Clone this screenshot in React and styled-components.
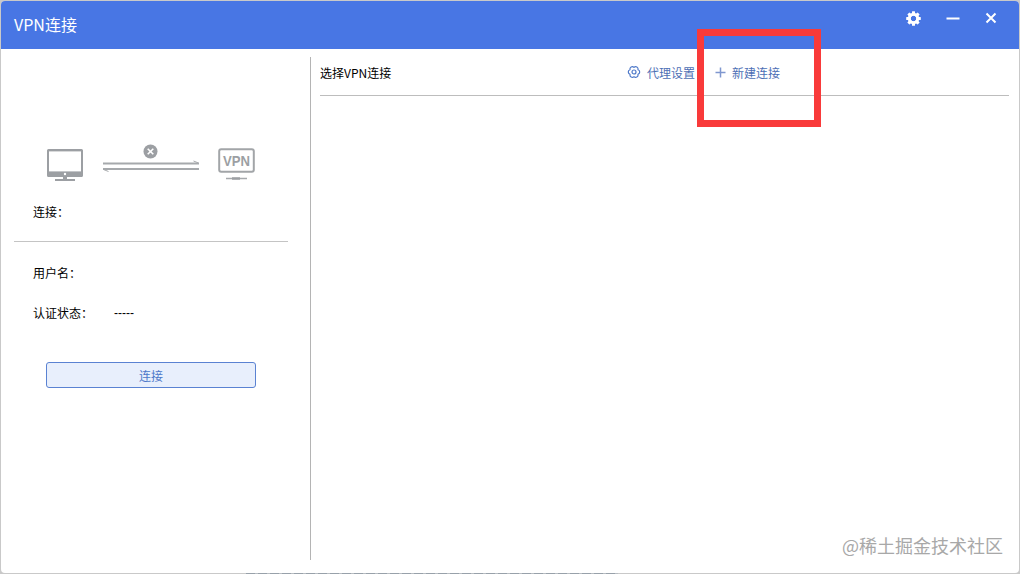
import React from 'react';
import styled, { createGlobalStyle } from 'styled-components';

const GlobalStyle = createGlobalStyle`
  html, body {
    margin: 0;
    padding: 0;
    background: #c9c9c9;
  }
  #root {
    width: 1020px;
    height: 574px;
  }
`;

const FONT = `"Noto Sans CJK SC", "Liberation Sans", sans-serif`;

function DesktopIcon() {
  return (
    <svg width="38" height="33" viewBox="0 0 38 33">
      <path d="M2.5 1h33A1.5 1.5 0 0 1 37 2.5v25a1.5 1.5 0 0 1-1.5 1.5h-33A1.5 1.5 0 0 1 1 27.5v-25A1.5 1.5 0 0 1 2.5 1z" fill="#9c9fa3" />
      <rect x="3" y="3.4" width="32" height="20" fill="#fff" />
      <circle cx="19" cy="26" r="1.2" fill="#fff" />
      <rect x="17" y="29" width="4" height="3" fill="#9c9fa3" />
      <rect x="9" y="31" width="20" height="2" fill="#9c9fa3" />
    </svg>
  );
}

function LinkIcon() {
  return (
    <svg width="98" height="37" viewBox="0 0 98 37">
      <circle cx="48.5" cy="7.5" r="7" fill="#9c9fa3" />
      <path d="M45.7 4.7l5.6 5.6M51.3 4.7l-5.6 5.6" stroke="#fff" strokeWidth="1.6" fill="none" />
      <path d="M1 19.5h96" stroke="#a6a9ac" strokeWidth="2" fill="none" />
      <path d="M91.5 17l5 2" stroke="#a6a9ac" strokeWidth="1" fill="none" />
      <path d="M1 25h96" stroke="#a6a9ac" strokeWidth="2" fill="none" />
      <path d="M1.5 25.5l5 2" stroke="#a6a9ac" strokeWidth="1" fill="none" />
    </svg>
  );
}

function VpnIcon() {
  return (
    <svg width="38" height="33" viewBox="0 0 38 33">
      <rect x="1.2" y="1.2" width="34.6" height="22.6" rx="2" fill="#fff" stroke="#a2a5a8" strokeWidth="2" />
      <text x="5" y="18" textLength="27" lengthAdjust="spacingAndGlyphs" fontFamily='"Liberation Sans", sans-serif' fontWeight="700" fontSize="15" fill="#9c9fa3">VPN</text>
      <path d="M8 30.5h21" stroke="#a6a9ac" strokeWidth="1.4" fill="none" />
      <path d="M14 30.5h8" stroke="#9c9fa3" strokeWidth="2.6" fill="none" />
    </svg>
  );
}

function GearOutline() {
  return (
    <svg width="14" height="14" viewBox="0 0 14 14">
      <path d="M7 2.4A2.4 2.4 0 0 1 11 4.7A2.4 2.4 0 0 1 11 9.3A2.4 2.4 0 0 1 7 11.6A2.4 2.4 0 0 1 3 9.3A2.4 2.4 0 0 1 3 4.7A2.4 2.4 0 0 1 7 2.4z" fill="none" stroke="#4d78c9" strokeWidth="1.2" strokeLinejoin="round" />
      <circle cx="7" cy="7" r="2" fill="none" stroke="#4d78c9" strokeWidth="1.2" />
    </svg>
  );
}

function PlusIcon() {
  return (
    <svg width="11" height="11" viewBox="0 0 11 11">
      <path d="M5.5 0.5v10M0.5 5.5h10" stroke="#7f97cf" strokeWidth="1.5" fill="none" />
    </svg>
  );
}

function SolidGear() {
  return (
    <svg width="15" height="15" viewBox="0 0 15 15">
      <circle cx="7.5" cy="7.5" r="4.2" fill="none" stroke="#fff" strokeWidth="3" />
      {[0, 45, 90, 135].map(a => (
        <rect key={a} x="5.9" y="0.2" width="3.2" height="14.6" rx="0.6" fill="#fff" transform={`rotate(${a} 7.5 7.5)`} mask="url(#gear-hole)" />
      ))}
      <mask id="gear-hole">
        <rect width="15" height="15" fill="#fff" />
        <circle cx="7.5" cy="7.5" r="2.9" fill="#000" />
      </mask>
    </svg>
  );
}

function MinimizeIcon() {
  return (
    <svg width="14" height="14" viewBox="0 0 14 14">
      <path d="M0.5 7.5h13" stroke="#fff" strokeWidth="2" fill="none" />
    </svg>
  );
}

function CloseIcon() {
  return (
    <svg width="12" height="12" viewBox="0 0 12 12">
      <path d="M1.5 1.5l9 9M10.5 1.5l-9 9" stroke="#fff" strokeWidth="2" fill="none" />
    </svg>
  );
}

export default function App() {
  return (
    <>
      <GlobalStyle />
      <Stage>
        <Window>
          <TitleBar>
            <Title>VPN连接</Title>
            <WindowControls>
              <SolidGear />
              <MinimizeIcon />
              <CloseIcon />
            </WindowControls>
          </TitleBar>
          <Body>
            <LeftPanel>
              <Topology>
                <DesktopIcon />
                <LinkIcon />
                <VpnIcon />
              </Topology>
              <StatusLine>连接：</StatusLine>
              <PanelRule />
              <InfoRows>
                <InfoRow>用户名：</InfoRow>
                <InfoRow>
                  <InfoLabel>认证状态：</InfoLabel>
                  <InfoValue>-----</InfoValue>
                </InfoRow>
              </InfoRows>
              <ConnectButton>连接</ConnectButton>
            </LeftPanel>
            <RightPanel>
              <RightHeader>
                <HeaderTitle>选择VPN连接</HeaderTitle>
                <HeaderActions>
                  <ActionLink>
                    <GearOutline />
                    代理设置
                  </ActionLink>
                  <ActionLink>
                    <PlusIcon />
                    新建连接
                  </ActionLink>
                </HeaderActions>
              </RightHeader>
            </RightPanel>
          </Body>
          <Watermark>@稀土掘金技术社区</Watermark>
        </Window>
        <BackdropSliver />
        <Highlight />
      </Stage>
    </>
  );
}

const Stage = styled.div`
  position: relative;
  width: 1020px;
  height: 574px;
  overflow: hidden;
  padding: 1px;
  box-sizing: border-box;
  font-family: ${FONT};
`;

const Window = styled.div`
  position: relative;
  height: 100%;
  background: #fff;
  border-radius: 4px;
  overflow: hidden;
  display: flex;
  flex-direction: column;
`;

const TitleBar = styled.div`
  height: 48px;
  flex-shrink: 0;
  background: #4876e4;
  display: flex;
  justify-content: space-between;
  padding: 0 22px 0 13px;
`;

const Title = styled.div`
  font-size: 16px;
  line-height: 46px;
  color: #fff;
`;

const WindowControls = styled.div`
  display: flex;
  align-items: center;
  gap: 25px;
  height: 34px;
`;

const Body = styled.div`
  flex: 1;
  display: flex;
  padding: 8px 0 13px;
  min-height: 0;
`;

const LeftPanel = styled.div`
  width: 309px;
  flex-shrink: 0;
  border-right: 1px solid #b4b4b4;
  padding-top: 86px;
`;

const Topology = styled.div`
  display: flex;
  align-items: flex-end;
  gap: 18px;
  padding-left: 45px;
  height: 38px;
`;

const StatusLine = styled.div`
  font-size: 12px;
  line-height: 18px;
  color: #000;
  margin: 22px 0 0 32px;
`;

const PanelRule = styled.div`
  height: 1px;
  background: #c4c4c4;
  margin: 20px 22px 0 13px;
`;

const InfoRows = styled.div`
  display: flex;
  flex-direction: column;
  gap: 22px;
  padding: 22px 0 0 32px;
`;

const InfoRow = styled.div`
  display: flex;
  font-size: 12px;
  line-height: 18px;
  color: #000;
`;

const InfoLabel = styled.span`
  width: 81px;
`;

const InfoValue = styled.span`
  font-family: "Liberation Sans", sans-serif;
`;

const ConnectButton = styled.button`
  display: block;
  width: 210px;
  height: 26px;
  margin: 40px 0 0 45px;
  padding: 2px 0 0;
  box-sizing: border-box;
  background: #e8effc;
  border: 1px solid #5a82d2;
  border-radius: 3px;
  color: #4d78c9;
  font-family: ${FONT};
  font-size: 12px;
  line-height: 22px;
`;

const RightPanel = styled.div`
  flex: 1;
  padding: 0 10px 0 9px;
`;

const RightHeader = styled.div`
  display: flex;
  align-items: center;
  height: 30px;
  padding-bottom: 8px;
  border-bottom: 1px solid #bdbdbd;
`;

const HeaderTitle = styled.div`
  width: 307px;
  font-size: 12px;
  color: #000;
`;

const HeaderActions = styled.div`
  display: flex;
  align-items: center;
  gap: 20px;
`;

const ActionLink = styled.div`
  display: flex;
  align-items: center;
  gap: 6px;
  font-size: 12px;
  color: #4d6fb5;
`;

const Watermark = styled.div`
  position: absolute;
  right: 16px;
  bottom: 17px;
  font-size: 18px;
  line-height: 22px;
  color: #a8a8a8;
`;

/* bit of the page behind the window, showing under its bottom edge */
const BackdropSliver = styled.div`
  position: absolute;
  left: 246px;
  bottom: 0;
  width: 372px;
  height: 1px;
  background: repeating-linear-gradient(90deg, #98a1aa 0 9px, #b8bdc2 9px 12px);
`;

const Highlight = styled.div`
  position: absolute;
  left: 697px;
  top: 29px;
  width: 124px;
  height: 98px;
  box-sizing: border-box;
  border: 7px solid #f93a3a;
`;
